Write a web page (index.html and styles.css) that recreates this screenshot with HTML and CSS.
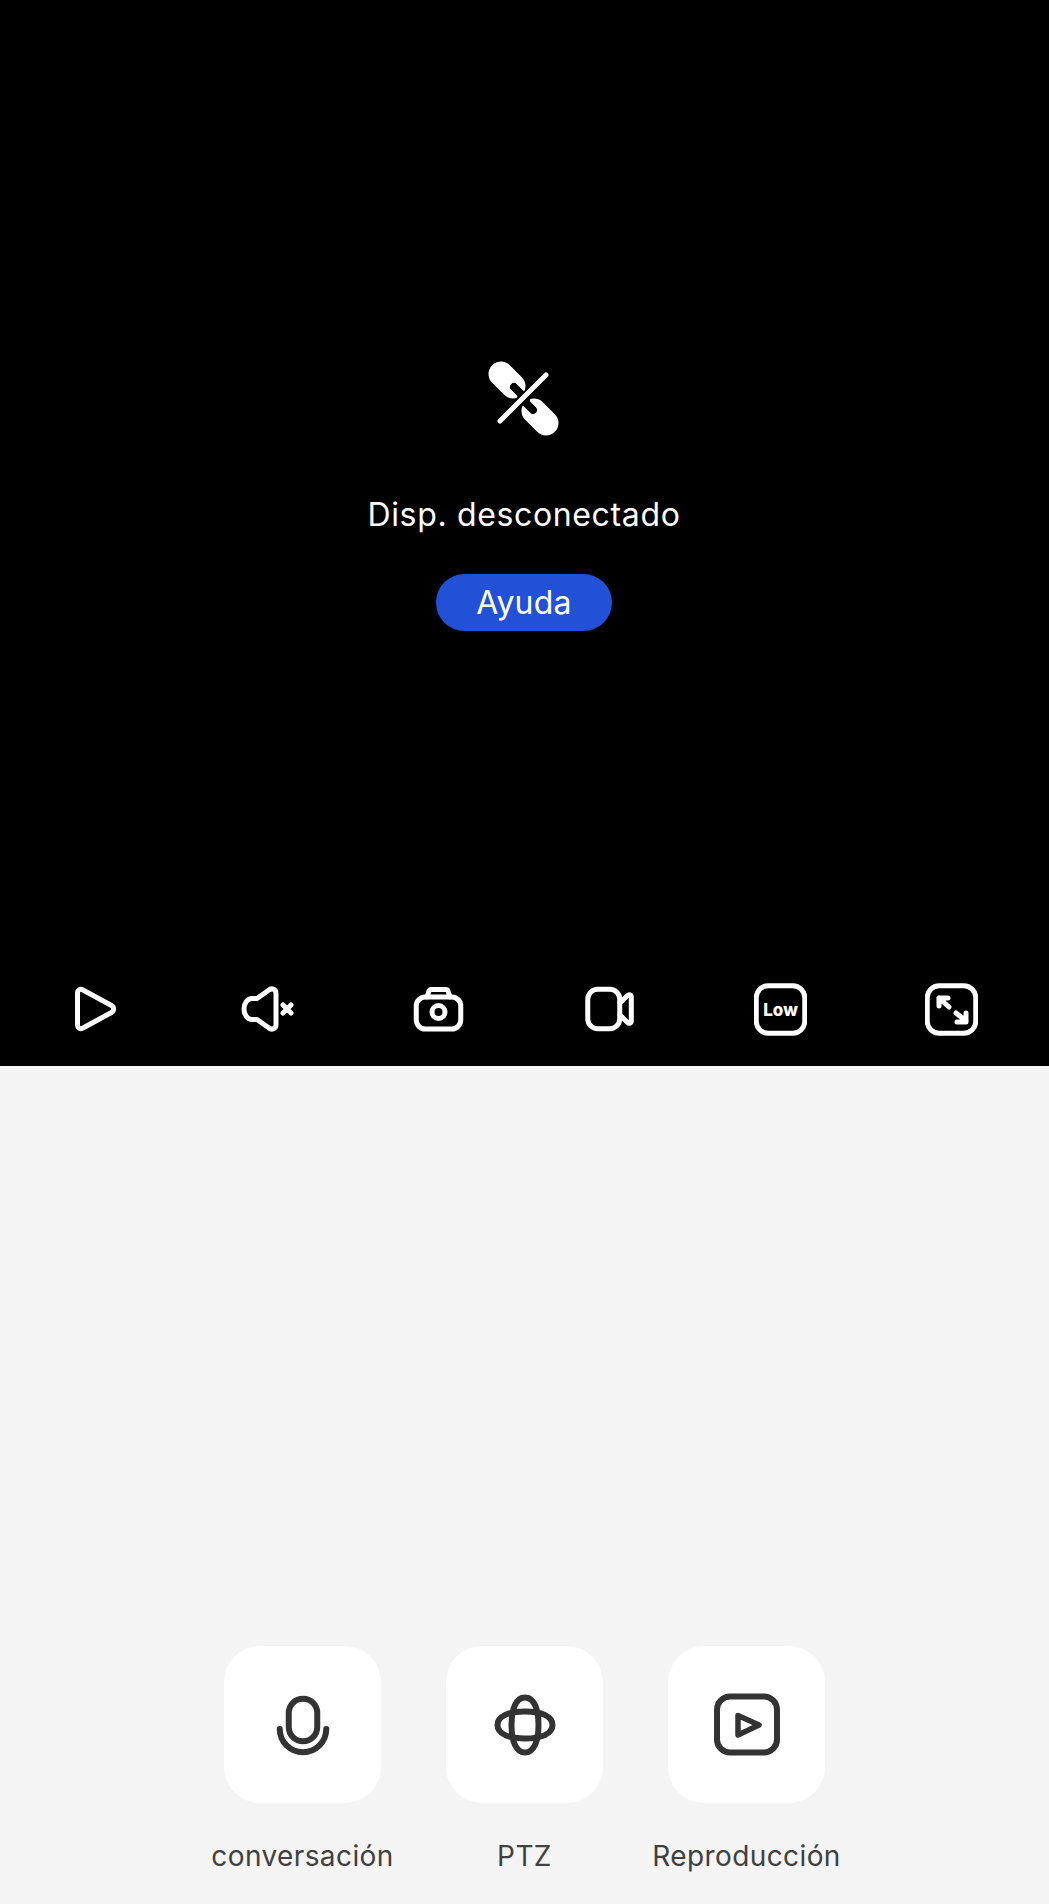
FILE: index.html
```html
<!DOCTYPE html>
<html lang="es">
<head>
    <meta charset="UTF-8">
    <meta name="viewport" content="width=device-width, initial-scale=1.0">
    <title>Dispositivo</title>
    <link rel="stylesheet" href="styles.css">
</head>
<body>

    <section class="video">
        <div class="status">
            <svg class="status-icon" viewBox="0 0 80 80" fill="none">
                <path class="link-body" d="M17 16L29 28M62 65L50 53"/>
                <path class="link-slot" d="M30 29L42 41M49 52L37 40"/>
                <path class="link-gap" d="M15 64L63 16"/>
                <path class="link-bar" d="M16 63L62 17"/>
            </svg>
            <p class="status-text">Disp. desconectado</p>
            <button class="help-btn">Ayuda</button>
        </div>

        <div class="toolbar">
            <svg class="tool" viewBox="0 0 53 53" fill="none">
                <path d="M7.5 10c0-3 2.500-4.500 5-3.200L41.500 22.500c2.800 1.500 2.800 5.500 0 7L12.500 45.200c-2.500 1.300-5-.2-5-3.200z"/>
            </svg>
            <svg class="tool" viewBox="0 0 53 53" fill="none">
                <path d="M35 10.500c0-4-4-6-7-3.500L16 15.500H11a8 10.500 0 0 0 0 21h5L28 45c3 2.500 7 .5 7-3.500z"/>
                <path d="M42 22l8 8M50 22l-8 8"/>
            </svg>
            <svg class="tool" viewBox="0 0 53 53" fill="none">
                <rect x="4.250" y="14" width="44.500" height="32" rx="9"/>
                <path d="M15 14l2-6c.4-1 1-1.500 2-1.500h15c1 0 1.600.5 2 1.500l2 6"/>
                <circle cx="26.500" cy="29" r="6.500"/>
            </svg>
            <svg class="tool" viewBox="0 0 53 53" fill="none">
                <rect x="4.750" y="6.250" width="32" height="39.500" rx="10"/>
                <path d="M37 20l7.500-7.500c1.500-1.500 3.800-.7 3.800 1.500v24c0 2.200-2.300 3-3.800 1.500L37 32"/>
            </svg>
            <svg class="tool" viewBox="0 0 53 53" fill="none">
                <rect x="2.250" y="2.750" width="48.500" height="47.500" rx="12"/>
                <text class="tool-label" x="26.500" y="32.500">Low</text>
            </svg>
            <svg class="tool" viewBox="0 0 53 53" fill="none">
                <rect x="2.250" y="2.750" width="48.500" height="47.500" rx="12"/>
                <path d="M14 15l10 9M14 23v-8h9M31 30l10 8M41 30v9H32"/>
            </svg>
        </div>
    </section>

    <section class="actions">
        <div class="action">
            <div class="action-card">
                <svg class="action-icon" width="64" height="64" viewBox="0 0 64 64" fill="none">
                    <rect x="17.750" y="5.750" width="28.500" height="42.500" rx="14.250"/>
                    <path d="M8.750 36a23.250 23.250 0 0 0 46.500 0"/>
                </svg>
            </div>
            <span class="action-label">conversación</span>
        </div>
        <div class="action">
            <div class="action-card">
                <svg class="action-icon" width="64" height="64" viewBox="0 0 64 64" fill="none">
                    <path d="M4.500 32C4.500 23 16 18.500 32 18.500S59.500 23 59.500 32 48 45.500 32 45.500 4.500 41 4.500 32z"/>
                    <path d="M32 4.500C23 4.500 18.500 16 18.500 32S23 59.500 32 59.500 45.500 48 45.500 32 41 4.500 32 4.500z"/>
                </svg>
            </div>
            <span class="action-label">PTZ</span>
        </div>
        <div class="action">
            <div class="action-card">
                <svg class="action-icon" width="72" height="72" viewBox="0 0 72 72" fill="none">
                    <rect x="6" y="7.500" width="60" height="56" rx="13"/>
                    <path class="play-mark" d="M27 26.500L48 36 27 46z"/>
                </svg>
            </div>
            <span class="action-label">Reproducción</span>
        </div>
    </section>

</body>
</html>
```

FILE: styles.css
```css
* {
    box-sizing: border-box;
}
body {
    margin: 0;
    height: 1904px;
    display: flex;
    flex-direction: column;
    font-family: Inter, "Noto Sans", sans-serif;
    background-color: #f4f4f4;
}
.video {
    height: 1066px;
    background: #000;
    color: #fff;
    display: flex;
    flex-direction: column;
    justify-content: space-between;
}
.status {
    padding: 358px 1px 0 0;
    display: flex;
    flex-direction: column;
    align-items: center;
}
.status-icon {
    width: 80px;
    height: 80px;
}
.link-body {
    stroke: #fff;
    stroke-width: 25;
    stroke-linecap: round;
}
.link-slot {
    stroke: #000;
    stroke-width: 8;
    stroke-linecap: round;
}
.link-gap {
    stroke: #000;
    stroke-width: 8;
}
.link-bar {
    stroke: #fff;
    stroke-width: 5;
    stroke-linecap: round;
}
.status-text {
    margin: 52px 0 0;
    font-size: 32px;
    line-height: 50px;
    letter-spacing: 0.65px;
}
.help-btn {
    margin-top: 34px;
    width: 176px;
    height: 57px;
    padding: 0;
    border: none;
    border-radius: 29px;
    background: #2251d8;
    color: #fff;
    font-family: inherit;
    font-size: 32px;
    letter-spacing: 0.2px;
}
.toolbar {
    display: flex;
    justify-content: space-between;
    padding: 0 71px 30px 70px;
}
.tool {
    width: 53px;
    height: 53px;
    stroke: #fff;
    stroke-width: 5;
    stroke-linecap: round;
    stroke-linejoin: round;
}
.tool-label {
    fill: #fff;
    stroke: none;
    font-size: 17px;
    font-weight: 800;
    text-anchor: middle;
}
.actions {
    flex: 1;
    display: flex;
    justify-content: center;
    gap: 65px;
    padding-top: 580px;
}
.action {
    width: 157px;
    display: flex;
    flex-direction: column;
    align-items: center;
}
.action-card {
    width: 157px;
    height: 157px;
    border-radius: 36px;
    background: #fff;
    display: flex;
    align-items: center;
    justify-content: center;
}
.action-icon {
    stroke: #333;
    stroke-width: 6;
    stroke-linecap: round;
    stroke-linejoin: round;
}
.play-mark {
    stroke-width: 5.500;
}
.action-label {
    margin-top: 33px;
    font-size: 28px;
    line-height: 40px;
    letter-spacing: 0.4px;
    color: #404040;
    white-space: nowrap;
}
```
